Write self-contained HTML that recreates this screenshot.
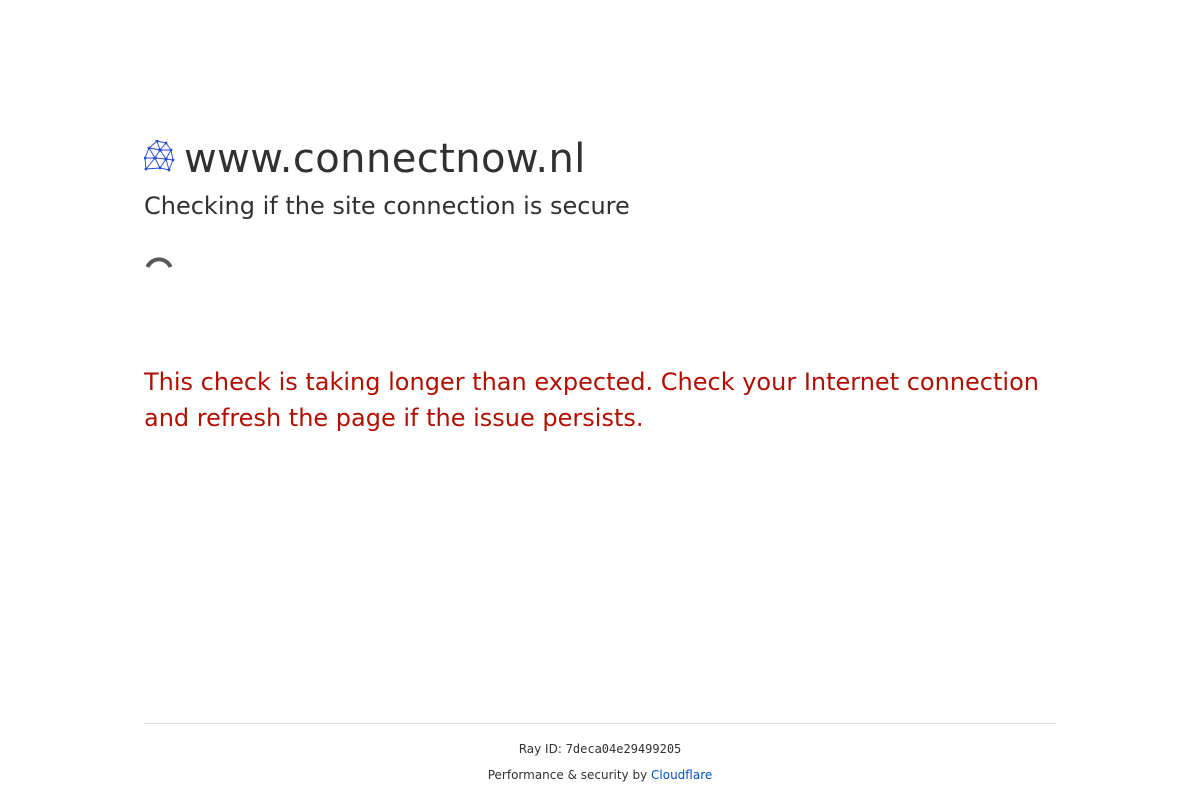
<!DOCTYPE html>
<html><head><meta charset="utf-8"><style>
body{margin:0;background:#fff;font-family:"DejaVu Sans","Liberation Sans",sans-serif;color:#313131;}
h1{position:absolute;left:144px;top:132px;margin:0;font-size:40px;font-weight:500;line-height:54px;white-space:nowrap;letter-spacing:0.42px;}
h1 svg{position:absolute;left:0;top:8px;}
h1 span{margin-left:40px;}
h2{position:absolute;left:144px;top:188px;margin:0;font-size:24px;font-weight:normal;line-height:36px;}
.spin{position:absolute;left:144px;top:256px;}
.err{position:absolute;left:144px;top:364px;width:912px;color:#b20f03;font-size:24px;line-height:36px;}
.hr{position:absolute;left:144px;top:723px;width:912px;border-top:1px solid #d9d9d9;}
.f{position:absolute;left:0;width:1200px;text-align:center;font-size:12px;color:#313131;}
.f code{font-family:"DejaVu Sans Mono",monospace;}
a{color:#0051c3;text-decoration:none;}
</style></head><body>
<h1><svg width="32" height="32" viewBox="0 0 32 32" fill="none" stroke="#2547d0" stroke-width="0.9"><g><path d="M13 1L22 3L27 10L29 20L25 30L16 28L2 29L1 18L5 8Z"/><path d="M13 1L16 10L22 3M5 8L16 10L27 10M16 10L11 18L1 18M16 10L22 19L29 20M11 18L22 19L25 30M11 18L2 29M22 19L16 28M11 18L16 28M5 8L11 18M27 10L22 19"/></g><g fill="#2547d0" stroke="none"><circle cx="13" cy="1" r="1.4"/><circle cx="22" cy="3" r="1.4"/><circle cx="27" cy="10" r="1.4"/><circle cx="29" cy="20" r="1.4"/><circle cx="25" cy="30" r="1.4"/><circle cx="16" cy="28" r="1.4"/><circle cx="2" cy="29" r="1.4"/><circle cx="1" cy="18" r="1.4"/><circle cx="5" cy="8" r="1.4"/><circle cx="16" cy="10" r="1.6"/><circle cx="11" cy="18" r="1.6"/><circle cx="22" cy="19" r="1.6"/></g></svg><span>www.connectnow.nl</span></h1>
<h2>Checking if the site connection is secure</h2>
<svg class="spin" width="30" height="30" viewBox="0 0 30 30"><path d="M3.5 11 A12.5 12.5 0 0 1 26.5 11" fill="none" stroke="#595959" stroke-width="4"/></svg>
<div class="err">This check is taking longer than expected. Check your Internet connection and refresh the page if the issue persists.</div>
<div class="hr"></div>
<div class="f" style="top:742px">Ray ID: <code>7deca04e29499205</code></div>
<div class="f" style="top:768px">Performance &amp; security by <a>Cloudflare</a></div>
</body></html>
